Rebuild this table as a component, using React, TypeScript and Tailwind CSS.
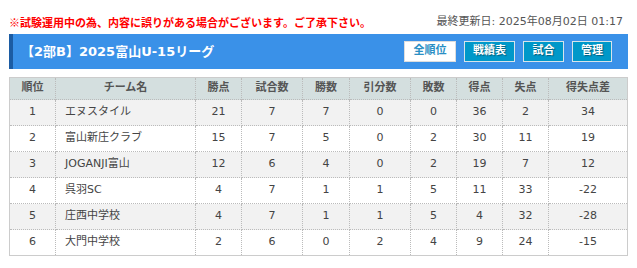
const cols = [
  { label: "順位", w: "w-[46px]" },
  { label: "チーム名", w: "w-[140px]" },
  { label: "勝点", w: "w-[46px]" },
  { label: "試合数", w: "w-[61px]" },
  { label: "勝数", w: "w-[47px]" },
  { label: "引分数", w: "w-[61px]" },
  { label: "敗数", w: "w-[46px]" },
  { label: "得点", w: "w-[46px]" },
  { label: "失点", w: "w-[46px]" },
  { label: "得失点差", w: "w-[79px]" },
];

const rows: (string | number)[][] = [
  [1, "エヌスタイル", 21, 7, 7, 0, 0, 36, 2, 34],
  [2, "富山新庄クラブ", 15, 7, 5, 0, 2, 30, 11, 19],
  [3, "JOGANJI富山", 12, 6, 4, 0, 2, 19, 7, 12],
  [4, "呉羽SC", 4, 7, 1, 1, 5, 11, 33, -22],
  [5, "庄西中学校", 4, 7, 1, 1, 5, 4, 32, -28],
  [6, "大門中学校", 2, 6, 0, 2, 4, 9, 24, -15],
];

function NavButton({ label, w, active }: { label: string; w: string; active?: boolean }) {
  return (
    <span
      className={`flex h-[21px] ${w} items-center justify-center border text-[11px] font-bold ${
        active
          ? "border-[#dddddd] bg-white text-[#2a8fc4]"
          : "border-[#d8e4ea] bg-[#0098c9] text-white [text-shadow:1px_1px_1px_rgba(0,0,0,0.4)]"
      }`}
    >
      {label}
    </span>
  );
}

export default function App() {
  return (
    <div className="w-[637px] h-[268px] bg-white px-[9px] pt-[14px] font-['DejaVu_Sans','Noto_Sans_CJK_JP',sans-serif] text-[#444]">
      {/* notice + updated */}
      <div className="flex items-center justify-between h-4 pr-[5px]">
        <p className="text-[11px] font-bold text-[#ff0000] font-['Noto_Sans_CJK_JP',sans-serif]">
          ※試験運用中の為、内容に誤りがある場合がございます。ご了承下さい。
        </p>
        <p className="text-[11px] text-[#555]">最終更新日: 2025年08月02日 01:17</p>
      </div>

      {/* league header bar */}
      <div className="mt-[4px] flex h-[35px] items-center justify-between border-l-4 border-[#1c5ca3] bg-[#3a91e8] pl-[8px] pr-[16px]">
        <h1 className="text-[13px] font-bold text-white">【2部B】2025富山U-15リーグ</h1>
        <div className="flex gap-[8px]">
          <NavButton label="全順位" w="w-[52px]" active />
          <NavButton label="戦績表" w="w-[51px]" />
          <NavButton label="試合" w="w-[41px]" />
          <NavButton label="管理" w="w-[40px]" />
        </div>
      </div>

      {/* standings */}
      <table className="mt-[8px] w-[619px] table-fixed border-collapse border border-[#cccccc] text-[11px]">
        <thead>
          <tr className="h-[22px] bg-[#d4dfdf]">
            {cols.map((c) => (
              <th
                key={c.label}
                className={`${c.w} border-x border-dotted border-[#bbbbbb] font-bold text-[#555] text-center`}
              >
                {c.label}
              </th>
            ))}
          </tr>
        </thead>
        <tbody>
          {rows.map((r, i) => (
            <tr key={i} className={`h-[26px] ${i % 2 === 0 ? "bg-[#f2f2f2]" : "bg-white"}`}>
              {r.map((v, j) => (
                <td
                  key={j}
                  className={`border border-dotted border-[#bbbbbb] ${
                    j === 1 ? "pl-[9px] text-left" : "text-center"
                  }`}
                >
                  {v}
                </td>
              ))}
            </tr>
          ))}
        </tbody>
      </table>
    </div>
  );
}
